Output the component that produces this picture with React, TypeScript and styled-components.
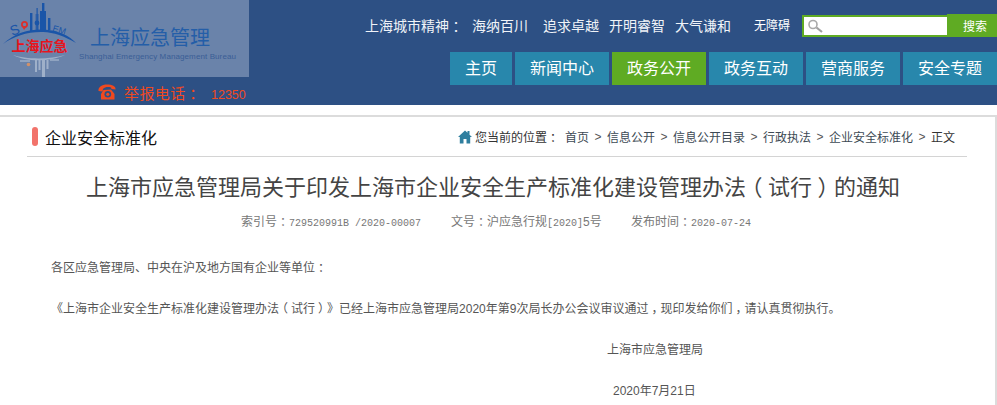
import React from "react";
import styled, { createGlobalStyle } from "styled-components";

const Global = createGlobalStyle`
  html, body { margin: 0; padding: 0; background: #fff; overflow: hidden; }
  body {
    font-family: "Liberation Sans", "Noto Sans CJK SC", sans-serif;
    text-spacing-trim: space-all;
  }
  * { box-sizing: border-box; }
`;

const Page = styled.div`
  width: 997px;
  height: 405px;
  overflow: hidden;
`;

const Header = styled.header`
  height: 105px;
  background: #2d5084;
  display: flex;
  justify-content: space-between;
`;

const Brand = styled.div`
  width: 249px;
  display: flex;
  flex-direction: column;
`;

const LogoBox = styled.div`
  height: 77px;
  background: #6a83aa;
  display: flex;
`;

const LogoNames = styled.div`
  display: flex;
  flex-direction: column;
  margin-left: 1px;
  padding-top: 25px;
`;

const LogoTitle = styled.div`
  font-size: 20px;
  line-height: 26px;
  color: #245ea8;
  margin-left: 11px;
  white-space: nowrap;
`;

const LogoEnglish = styled.div`
  font-size: 8px;
  line-height: 10px;
  margin-top: 1px;
  color: #3a5e96;
  letter-spacing: 0.1px;
  white-space: nowrap;
`;

const Hotline = styled.div`
  display: flex;
  align-items: center;
  height: 28px;
  padding: 2px 0 0 98px;
  color: #f0491f;
  white-space: nowrap;
`;

const HotlineLabel = styled.span`
  font-size: 15px;
  letter-spacing: 0.4px;
  margin-left: 8px;
  width: 87px;
  flex: none;
`;

const HotlineNumber = styled.span`
  font-size: 12.5px;
  padding-top: 6px;
`;

const Right = styled.div`
  width: 632px;
  display: flex;
  flex-direction: column;
`;

const TopBar = styled.div`
  height: 52px;
  padding-top: 14px;
  display: flex;
  color: #f0f3f8;
  white-space: nowrap;
`;

const Spirit = styled.span<{ $w: number }>`
  width: ${(p) => p.$w}px;
  font-size: 14px;
  line-height: 24px;
  flex: none;
`;

const Accessible = styled.span`
  width: 48px;
  flex: none;
  font-size: 12px;
  line-height: 24px;
  color: #fff;
`;

const SearchInput = styled.div`
  width: 145px;
  height: 22px;
  margin-top: 1px;
  background: #fff;
  border: 2px solid #5fab23;
  border-right: none;
  display: flex;
  align-items: center;
  padding-left: 3px;
`;

const SearchButton = styled.div`
  width: 50px;
  height: 23px;
  padding-left: 6px;
  background: #5fab23;
  color: #fff;
  font-size: 12px;
  line-height: 27px;
  text-align: center;
`;

const Nav = styled.nav`
  display: flex;
  gap: 3px;
  padding-left: 85px;
`;

const NavItem = styled.div<{ $active?: boolean; $w: number }>`
  width: ${(p) => p.$w}px;
  height: 33px;
  background: ${(p) => (p.$active ? "#5fab23" : "#2887ac")};
  color: #fff;
  font-size: 16px;
  line-height: 34px;
  text-align: center;
  white-space: nowrap;
`;

const Main = styled.main`
  margin-top: 10px;
  border-top: 2px solid #dcdcdc;
  border-right: 2px solid #dcdcdc;
  padding: 0 28px 0 27px;
  height: 290px;
`;

const SectionBar = styled.div`
  height: 40px;
  border-bottom: 1px solid #d4d4d4;
  display: flex;
  align-items: center;
  justify-content: space-between;
  padding: 0 12px 0 5px;
`;

const SectionTitle = styled.div`
  display: flex;
  align-items: center;
  gap: 7px;
  font-size: 16px;
  color: #111;
`;

const Marker = styled.span`
  width: 6px;
  height: 19px;
  border-radius: 3px;
  background: #f2736b;
`;

const Crumbs = styled.div`
  display: flex;
  align-items: center;
  font-size: 12px;
  color: #333;
  white-space: nowrap;
`;

const CrumbLabel = styled.span`
  margin: 0 6px 0 3px;
`;

const Crumb = styled.span`
  color: #3d4a55;
`;

const CrumbSep = styled.span`
  width: 18px;
  text-align: center;
  color: #555;
  font-family: "Liberation Sans", sans-serif;
`;

const Punct = styled.span`
  display: inline-block;
  width: 1em;
  text-align: center;
  font-feature-settings: "halt";
`;

const Title = styled.h1`
  margin: 16px 0 0;
  padding-right: 8px;
  font-size: 22px;
  line-height: 30px;
  font-weight: 400;
  color: #444;
  text-align: center;
  white-space: nowrap;
`;

const Meta = styled.div`
  margin-top: 10px;
  padding-left: 214px;
  display: flex;
  font-size: 12px;
  line-height: 18px;
  color: #777;
  white-space: nowrap;
`;

const MetaItem = styled.span<{ $w: number }>`
  width: ${(p) => p.$w}px;
  flex: none;
`;

const Mono = styled.span`
  font-family: "Liberation Mono", "Noto Sans CJK SC", monospace;
  font-size: 10px;
`;

const Body = styled.div`
  font-size: 12px;
  line-height: 18px;
  color: #555;
  margin-top: 26px;
`;

const Para = styled.p<{ $indent: number; $gap: number }>`
  margin: ${(p) => p.$gap}px 0 0;
  padding-left: ${(p) => p.$indent}px;
  white-space: nowrap;
`;

const LogoSvg = styled.svg`
  width: 78px;
  height: 77px;
  flex: none;
`;

const Logo = () => (
  <LogoSvg viewBox="0 0 78 77">
    <g fill="#1a55a8">
      <rect x="42" y="3" width="2.4" height="27" />
      <rect x="40" y="11" width="6" height="19" />
      <rect x="36.5" y="8" width="1.2" height="22" />
      <rect x="35.5" y="14" width="3.2" height="16" opacity="0.6" />
      <circle cx="37" cy="23" r="2.4" />
      <rect x="30" y="13" width="2.4" height="18" />
      <rect x="48" y="18" width="2.4" height="12" />
    </g>
    <path d="M3 44 C14 33 30 29 43 29.500 C58 30 70 36 76 43 C64 36 54 32.500 43 32 C28 31.500 14 36 3 44Z" fill="#1a55a8" />
    <text x="12" y="36" fontSize="14" fontFamily="Liberation Sans" fill="#1a55a8" transform="rotate(-20 12 36)">S</text>
    <circle cx="24.500" cy="24.500" r="2.600" fill="none" stroke="#d9302c" strokeWidth="1.800" />
    <path d="M22 26 L24 30 L27 26Z" fill="#d9302c" />
    <text x="52" y="31" fontSize="9" fontFamily="Liberation Sans" fill="#1a55a8" transform="rotate(16 52 31)">EM</text>
    <text x="11.500" y="51" fontSize="14" fontWeight="700" fontFamily="Noto Sans CJK SC" fill="#e8141c">上海应急</text>
    <g fill="#9fb0c9">
      <rect x="35" y="60" width="2" height="12" />
      <rect x="38.500" y="60" width="2" height="10" />
      <rect x="42" y="60" width="3" height="17" />
      <rect x="46.500" y="60" width="2" height="9" />
      <path d="M13 55 C26 62 50 62 65 55 C50 59.500 26 59.500 13 55Z" />
      <path d="M20 60 h10 v2 h-10Z M50 59 h9 v2 h-9Z" opacity="0.7" />
    </g>
    <circle cx="28.500" cy="64.500" r="1.800" fill="#d0906a" />
  </LogoSvg>
);

const PhoneIcon = () => (
  <svg width="18" height="16" viewBox="0 0 18 16">
    <path d="M0.500 7 C0 3 4 0.500 9 0.500 C14 0.500 18 2 17.500 5.500 L13.500 5 L13 3.500 C10 2.500 7 3 5 5 L4.500 7.500 Z" fill="#f0491f" />
    <path d="M5.500 6 L13 5.500 L16.500 10 L16.500 15.500 L3 15.500 L3 10 Z" fill="#f0491f" />
    <circle cx="9.800" cy="10.300" r="3.300" fill="#2d5084" />
    <circle cx="9.800" cy="10.300" r="1.600" fill="#f0491f" />
  </svg>
);

const SearchGlyph = () => (
  <svg width="16" height="15" viewBox="0 0 16 15">
    <circle cx="6" cy="5.500" r="4" fill="none" stroke="#a9a9a9" strokeWidth="1.600" />
    <path d="M9.500 8.500 L15 13" stroke="#a0a0a0" strokeWidth="2.200" />
  </svg>
);

const HomeIcon = () => (
  <svg width="14" height="14" viewBox="0 0 14 14">
    <path d="M7 0.500 L9.500 2.800 L9.500 1 L11.500 1 L11.500 4.700 L14 7 L12.200 7 L12.200 13.500 L8.500 13.500 L8.500 9 L5.500 9 L5.500 13.500 L1.800 13.500 L1.800 7 L0 7 Z" fill="#2f7f9f" />
  </svg>
);

const navItems = [
  { label: "主页", w: 62 },
  { label: "新闻中心", w: 94 },
  { label: "政务公开", w: 94, active: true },
  { label: "政务互动", w: 94 },
  { label: "营商服务", w: 94 },
  { label: "安全专题", w: 94 },
];

const crumbs = ["首页", "信息公开", "信息公开目录", "行政执法", "企业安全标准化"];

export default function App() {
  return (
    <Page>
      <Global />
      <Header>
        <Brand>
          <LogoBox>
            <Logo />
            <LogoNames>
              <LogoTitle>上海应急管理</LogoTitle>
              <LogoEnglish>Shanghai Emergency Management Bureau</LogoEnglish>
            </LogoNames>
          </LogoBox>
          <Hotline>
            <PhoneIcon />
            <HotlineLabel>
              举报电话<Punct>：</Punct>
            </HotlineLabel>
            <HotlineNumber>12350</HotlineNumber>
          </Hotline>
        </Brand>
        <Right>
          <TopBar>
            <Spirit $w={107}>
              上海城市精神<Punct>：</Punct>
            </Spirit>
            <Spirit $w={71}>海纳百川</Spirit>
            <Spirit $w={66}>追求卓越</Spirit>
            <Spirit $w={66}>开明睿智</Spirit>
            <Spirit $w={79}>大气谦和</Spirit>
            <Accessible>无障碍</Accessible>
            <SearchInput>
              <SearchGlyph />
            </SearchInput>
            <SearchButton>搜索</SearchButton>
          </TopBar>
          <Nav>
            {navItems.map((n) => (
              <NavItem key={n.label} $w={n.w} $active={n.active}>
                {n.label}
              </NavItem>
            ))}
          </Nav>
        </Right>
      </Header>
      <Main>
        <SectionBar>
          <SectionTitle>
            <Marker />
            企业安全标准化
          </SectionTitle>
          <Crumbs>
            <HomeIcon />
            <CrumbLabel>
              您当前的位置<Punct>：</Punct>
            </CrumbLabel>
            {crumbs.map((c) => (
              <React.Fragment key={c}>
                <Crumb>{c}</Crumb>
                <CrumbSep>&gt;</CrumbSep>
              </React.Fragment>
            ))}
            <span>正文</span>
          </Crumbs>
        </SectionBar>
        <Title>
          上海市应急管理局关于印发上海市企业安全生产标准化建设管理办法<Punct>（</Punct>试行<Punct>）</Punct>的通知
        </Title>
        <Meta>
          <MetaItem $w={210}>
            索引号<Punct>：</Punct>
            <Mono>729520991B /2020-00007</Mono>
          </MetaItem>
          <MetaItem $w={180}>
            文号<Punct>：</Punct>沪应急行规<Mono>[2020]</Mono>5号
          </MetaItem>
          <MetaItem $w={160}>
            发布时间<Punct>：</Punct>
            <Mono>2020-07-24</Mono>
          </MetaItem>
        </Meta>
        <Body>
          <Para $indent={24} $gap={0}>
            各区应急管理局、中央在沪及地方国有企业等单位<Punct>：</Punct>
          </Para>
          <Para $indent={24} $gap={23}>
            《上海市企业安全生产标准化建设管理办法<Punct>（</Punct>试行<Punct>）</Punct>》已经上海市应急管理局2020年第9次局长办公会议审议通过<Punct>，</Punct>现印发给你们<Punct>，</Punct>请认真贯彻执行。
          </Para>
          <Para $indent={580} $gap={23}>
            上海市应急管理局
          </Para>
          <Para $indent={586} $gap={23}>
            2020年7月21日
          </Para>
        </Body>
      </Main>
    </Page>
  );
}
